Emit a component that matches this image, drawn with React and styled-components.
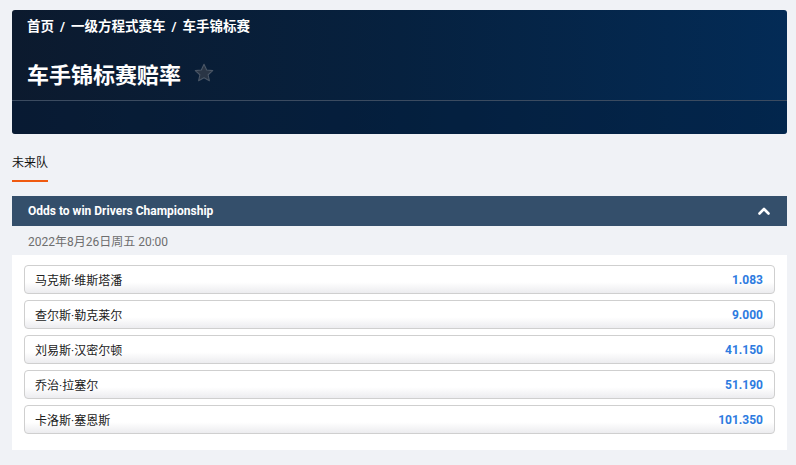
import styled, { createGlobalStyle } from 'styled-components'

const GlobalStyle = createGlobalStyle`
  body {
    margin: 0;
    background: #f0f2f6;
    font-family: Roboto, "Noto Sans CJK SC", sans-serif;
  }
`;

const crumbs = ['首页', '一级方程式赛车', '车手锦标赛']

const runners = [
  { name: '马克斯·维斯塔潘', odds: '1.083' },
  { name: '查尔斯·勒克莱尔', odds: '9.000' },
  { name: '刘易斯·汉密尔顿', odds: '41.150' },
  { name: '乔治·拉塞尔', odds: '51.190' },
  { name: '卡洛斯·塞恩斯', odds: '101.350' },
]

export default function App() {
  return (
    <Page>
      <GlobalStyle />
      <Hero>
        <Crumbs>
          {crumbs.map((c, i) => (
            <span key={c}>
              {i > 0 && <Slash>/</Slash>}
              {c}
            </span>
          ))}
        </Crumbs>
        <TitleRow>
          <Title>车手锦标赛赔率</Title>
          <svg width="22" height="22" viewBox="0 0 24 24" fill="#2a3545" stroke="#4a5666" strokeWidth="1.2" strokeLinejoin="round">
            <path d="M12 2.5l2.9 6.2 6.6.7-5 4.5 1.4 6.6L12 17.2l-5.9 3.3 1.4-6.6-5-4.5 6.6-.7z" />
          </svg>
        </TitleRow>
        <HeroFoot />
      </Hero>

      <Tabs>
        <Tab $active>未来队</Tab>
      </Tabs>

      <MarketHead>
        <MarketTitle>Odds to win Drivers Championship</MarketTitle>
        <svg width="14" height="14" viewBox="0 0 14 14" fill="none" stroke="#fff" strokeWidth="2.6" strokeLinecap="round" strokeLinejoin="round">
          <path d="M2.5 9.5L7 5l4.5 4.5" />
        </svg>
      </MarketHead>
      <DateRow>2022年8月26日周五 20:00</DateRow>
      <Panel>
        {runners.map(r => (
          <Runner key={r.name}>
            <Name>{r.name}</Name>
            <Odds>{r.odds}</Odds>
          </Runner>
        ))}
      </Panel>
    </Page>
  )
}

const Page = styled.div`
  padding: 10px 9px 0 12px;
`;

const Hero = styled.div`
  border-radius: 3px;
  background: linear-gradient(90deg, #0c1a2e 0%, #06213f 50%, #032b56 100%);
  color: #fff;
  overflow: hidden;
`;

const Crumbs = styled.div`
  padding: 7px 15px 0;
  height: 18px;
  font-size: 13.5px;
  font-weight: 700;
  line-height: 18px;
`;

const Slash = styled.span`
  margin: 0 6px;
`;

const TitleRow = styled.div`
  display: flex;
  align-items: center;
  gap: 12px;
  height: 66px;
  padding: 10px 15px 0;
  border-bottom: 1px solid #3b4b60;
  box-sizing: border-box;
`;

const Title = styled.h1`
  margin: 0;
  font-size: 22px;
  font-weight: 700;
`;

const HeroFoot = styled.div`
  height: 33px;
  background: rgba(4, 30, 60, 0.35);
`;

const Tabs = styled.div`
  display: flex;
  padding-top: 20px;
  margin-bottom: 14px;
`;

const Tab = styled.div`
  font-size: 12px;
  color: #111;
  line-height: 18px;
  height: 28px;
  box-sizing: border-box;
  border-bottom: 2px solid ${p => (p.$active ? '#f05a10' : 'transparent')};
`;

const MarketHead = styled.div`
  display: flex;
  align-items: center;
  justify-content: space-between;
  height: 30px;
  padding: 0 16px;
  background: #344f6b;
`;

const MarketTitle = styled.div`
  color: #fff;
  font-size: 12px;
  font-weight: 700;
`;

const DateRow = styled.div`
  height: 29px;
  padding: 0 16px;
  display: flex;
  align-items: center;
  font-size: 12px;
  color: #6e6e6e;
`;

const Panel = styled.div`
  background: #fff;
  padding: 10px 12px 16px;
  display: flex;
  flex-direction: column;
  gap: 6px;
`;

const Runner = styled.div`
  display: flex;
  align-items: center;
  justify-content: space-between;
  height: 29px;
  padding: 0 11px 0 10px;
  border: 1px solid #cfcfcf;
  border-radius: 4px;
  box-sizing: border-box;
  background: linear-gradient(180deg, #ffffff 0%, #ffffff 60%, #ececef 100%);
`;

const Name = styled.span`
  font-size: 12px;
  color: #222;
`;

const Odds = styled.span`
  font-size: 12px;
  font-weight: 700;
  color: #2d7be0;
`;
